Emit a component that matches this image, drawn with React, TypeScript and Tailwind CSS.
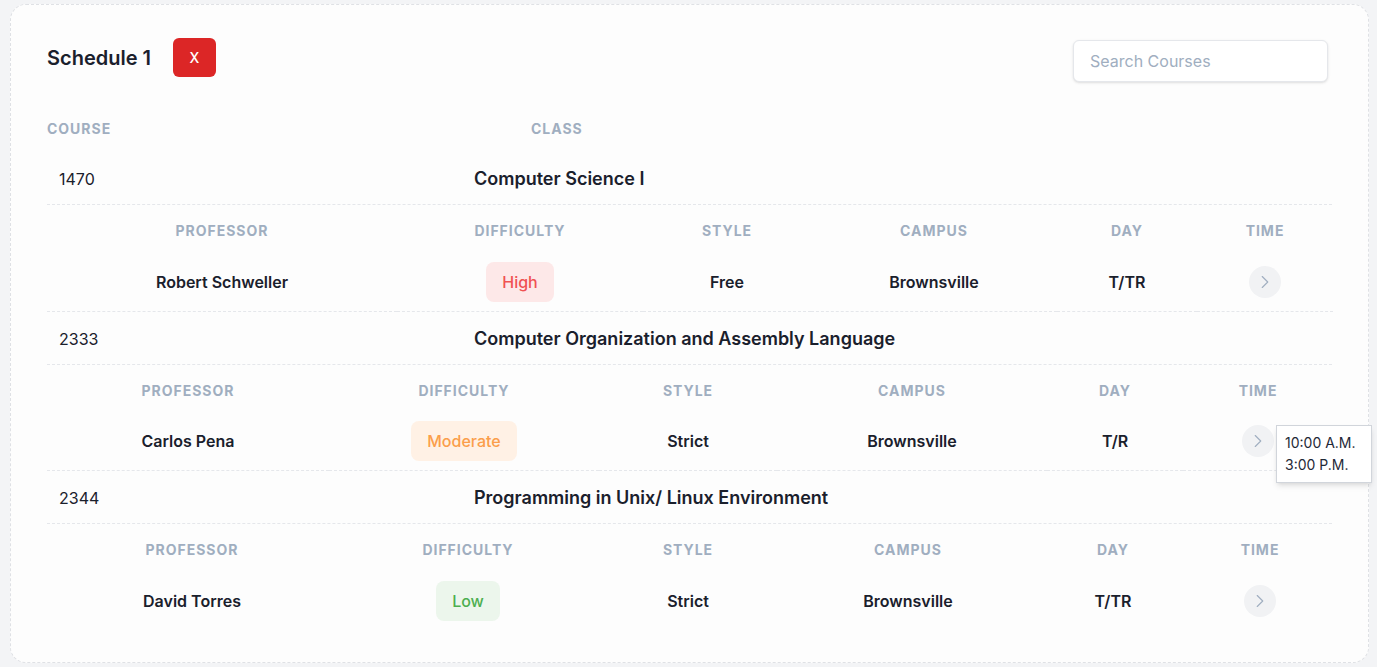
import React from 'react';
import { ChevronRight } from 'lucide-react';

type Course = {
  code: string;
  name: string;
  professor: string;
  difficulty: 'High' | 'Moderate' | 'Low';
  style: string;
  campus: string;
  day: string;
  cols: string[];
  times?: string[];
};

const courses: Course[] = [
  {
    code: '1470', name: 'Computer Science I', professor: 'Robert Schweller', difficulty: 'High', style: 'Free', campus: 'Brownsville', day: 'T/TR',
    cols: ['w-[350px]', 'w-[246px]', 'w-[168px]', 'w-[246px]', 'w-[140px]', 'w-[136px]'],
  },
  {
    code: '2333', name: 'Computer Organization and Assembly Language', professor: 'Carlos Pena', difficulty: 'Moderate', style: 'Strict', campus: 'Brownsville', day: 'T/R',
    cols: ['w-[282px]', 'w-[270px]', 'w-[178px]', 'w-[270px]', 'w-[136px]', 'w-[150px]'],
    times: ['10:00 A.M.', '3:00 P.M.'],
  },
  {
    code: '2344', name: 'Programming in Unix/ Linux Environment', professor: 'David Torres', difficulty: 'Low', style: 'Strict', campus: 'Brownsville', day: 'T/TR',
    cols: ['w-[290px]', 'w-[262px]', 'w-[178px]', 'w-[262px]', 'w-[148px]', 'w-[146px]'],
  },
];

const badge: Record<Course['difficulty'], string> = {
  High: 'bg-[#fde8e8] text-[#f05252]',
  Moderate: 'bg-[#fff1e5] text-[#fb9e4b]',
  Low: 'bg-[#ecf6ec] text-[#4caf50]',
};

const th = 'p-0 pt-[16px] pb-[12px] text-sm leading-5 font-bold uppercase tracking-[0.07em] text-[#a0aec0] text-center';
const td = 'p-0 h-[58px] text-base font-semibold text-[#1a202c] text-center';

function CourseBlock({ c, last }: { c: Course; last: boolean }) {
  return (
    <div>
      <div className="flex items-center h-[53px] pt-[2px] border-b border-dashed border-[#e5e7eb]">
        <div className="w-[427px] pl-3 text-base text-[#1a202c]">{c.code}</div>
        <div className="text-lg font-semibold text-[#1a202c]">{c.name}</div>
      </div>
      <table className={`w-full table-fixed border-collapse ${last ? '' : 'border-b border-dashed border-[#e5e7eb]'}`}>
        <colgroup>
          {c.cols.map((w, i) => (
            <col key={i} className={w} />
          ))}
        </colgroup>
        <thead>
          <tr>
            <th className={th}>Professor</th>
            <th className={th}>Difficulty</th>
            <th className={th}>Style</th>
            <th className={th}>Campus</th>
            <th className={th}>Day</th>
            <th className={th}>Time</th>
          </tr>
        </thead>
        <tbody>
          <tr>
            <td className={td}>{c.professor}</td>
            <td className={td}>
              <span className={`inline-block px-4 py-[10px] rounded-lg text-base font-medium leading-5 ${badge[c.difficulty]}`}>
                {c.difficulty}
              </span>
            </td>
            <td className={td}>{c.style}</td>
            <td className={td}>{c.campus}</td>
            <td className={td}>{c.day}</td>
            <td className={td}>
              <div className="relative inline-flex align-middle">
                <button className="w-8 h-8 rounded-full bg-[#f1f2f4] flex items-center justify-center">
                  <ChevronRight size={22} strokeWidth={1.25} className="text-[#a0aec0]" />
                </button>
                {c.times && (
                  <div className="absolute left-full top-0 ml-[2px] w-[96px] bg-white border border-[#d1d5db] shadow-md px-2 py-[6px] text-left">
                    {c.times.map((t) => (
                      <div key={t} className="text-sm font-normal leading-[22px] text-[#1f2937]">{t}</div>
                    ))}
                  </div>
                )}
              </div>
            </td>
          </tr>
        </tbody>
      </table>
    </div>
  );
}

export default function App() {
  return (
    <div className="min-h-screen bg-[#f3f4f6] pt-[4px]" style={{ fontFamily: 'Inter, "Noto Sans", sans-serif' }}>
      <div className="ml-[10px] w-[1359px] bg-[#fdfdfd] rounded-2xl border border-dashed border-[#dfe1e5] px-[36px] pt-[33px] pb-[32px]">
        <div className="flex items-start justify-between">
          <div className="flex items-center gap-[22px] h-[39px]">
            <h1 className="text-xl font-semibold text-[#1a202c]">Schedule 1</h1>
            <button className="w-[43px] h-[39px] rounded-md bg-[#dc2626] text-white text-sm font-medium">X</button>
          </div>
          <input
            placeholder="Search Courses"
            className="mt-[2px] mr-[4px] w-[255px] h-[42px] rounded-md border border-[#e5e7eb] bg-white shadow-sm px-4 text-base text-[#1a202c] placeholder:text-[#a0aec0] outline-none"
          />
        </div>
        <div className="flex items-center h-[46px] mt-[24px] text-sm font-bold uppercase tracking-[0.07em] text-[#a0aec0]">
          <div className="w-[484px]">Course</div>
          <div>Class</div>
        </div>
        {courses.map((c, i) => (
          <CourseBlock key={c.code} c={c} last={i === courses.length - 1} />
        ))}
      </div>
    </div>
  );
}
